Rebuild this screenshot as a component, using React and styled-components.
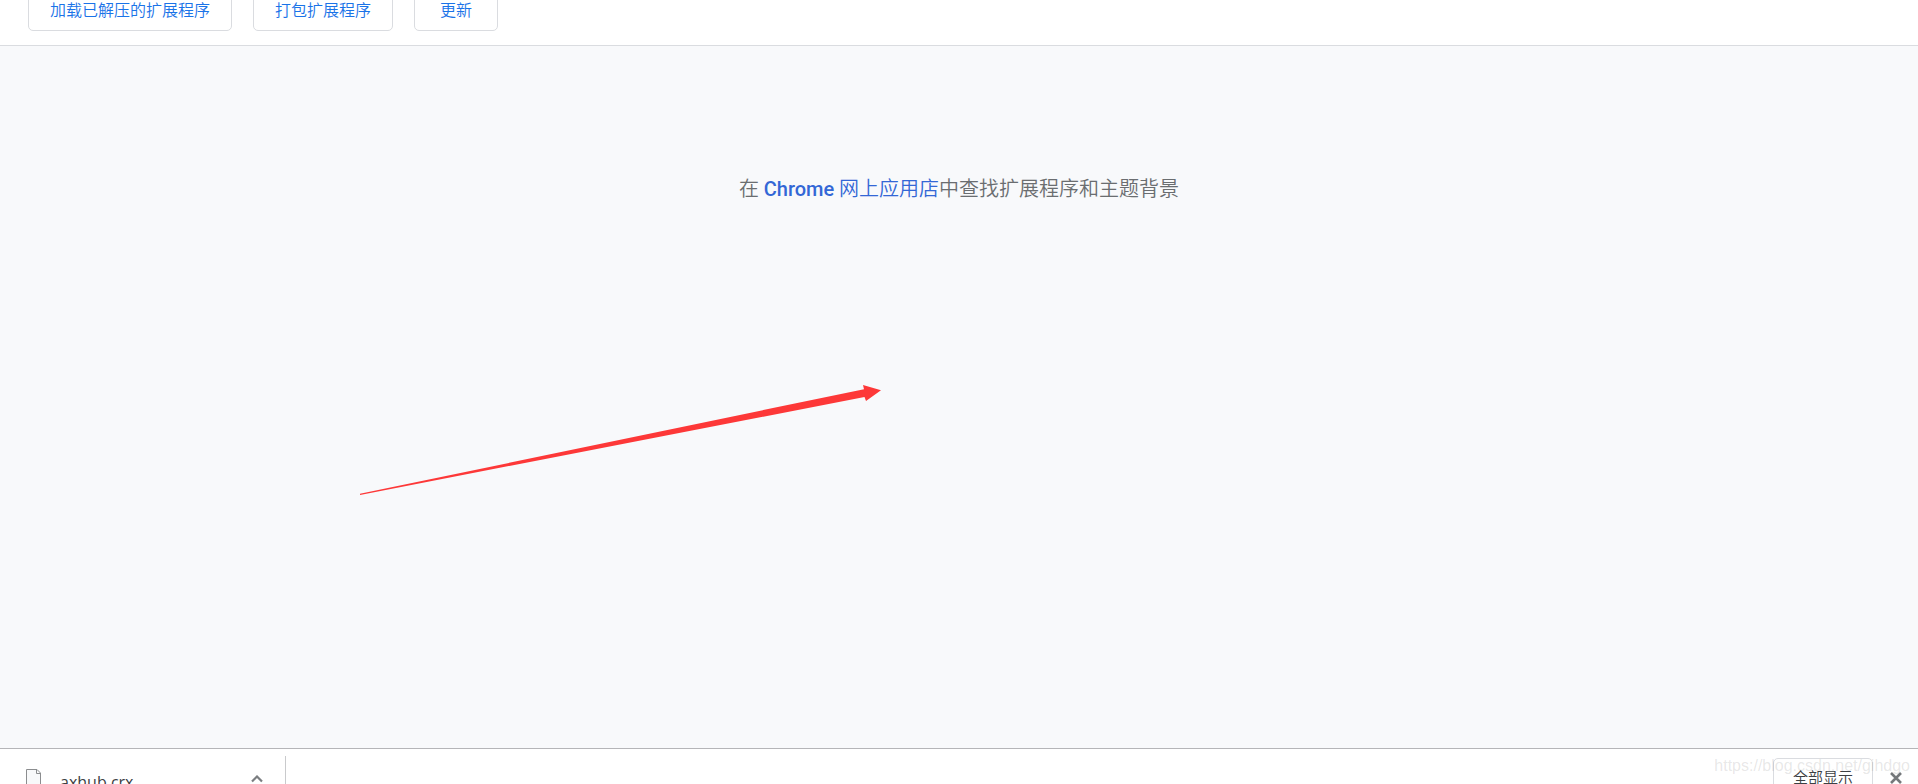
import React from "react"
import styled, { createGlobalStyle } from "styled-components"

const App = () => (
  <Page>
    <GlobalStyle />
    <Toolbar>
      <ToolbarButton type="button">加载已解压的扩展程序</ToolbarButton>
      <ToolbarButton type="button">打包扩展程序</ToolbarButton>
      <ToolbarButton type="button">更新</ToolbarButton>
    </Toolbar>
    <Main>
      <Message>
        在{" "}
        <StoreLink href="#store">
          <strong>Chrome</strong> 网上应用店
        </StoreLink>
        中查找扩展程序和主题背景
      </Message>
      <Arrow viewBox="0 0 523 118" aria-hidden="true">
        <path
          d="M1 115.8 L505 11.2 L504 7 L522 12.3 L507 23 L505.5 19 L1 117 Z"
          fill="#fd3838"
        />
      </Arrow>
    </Main>
    <Shelf>
      <Download>
        <FileIcon viewBox="0 0 16 20" aria-hidden="true">
          <path
            d="M.5 20V.5H11L14.5 4V20"
            fill="#f8f9fa"
            stroke="#8b8d8f"
          />
          <path d="M10.5 .5V4.5h4" fill="none" stroke="#8b8d8f" />
        </FileIcon>
        <FileName>axhub.crx</FileName>
        <IconButton type="button" aria-label="更多操作">
          <svg width="12" height="8" viewBox="0 0 12 8">
            <path
              d="M1 6.5l5-5 5 5"
              fill="none"
              stroke="#7b7e81"
              strokeWidth="2.2"
            />
          </svg>
        </IconButton>
      </Download>
      <ShelfActions>
        <ShowAll type="button">全部显示</ShowAll>
        <IconButton type="button" aria-label="关闭">
          <svg width="12" height="12" viewBox="0 0 12 12">
            <path d="M1 1l10 10M11 1L1 11" stroke="#75787b" strokeWidth="2.6" />
          </svg>
        </IconButton>
      </ShelfActions>
      <Watermark>https://blog.csdn.net/gihdgo</Watermark>
    </Shelf>
  </Page>
)

export default App

const GlobalStyle = createGlobalStyle`
  * {
    box-sizing: border-box;
  }

  body {
    margin: 0;
    font-family: Roboto, "Noto Sans CJK SC", sans-serif;
  }
`

const Page = styled.div`
  display: flex;
  flex-direction: column;
  height: 100vh;
  overflow: hidden;
  background: #f8f9fb;
`

const Toolbar = styled.header`
  display: flex;
  align-items: flex-end;
  flex-shrink: 0;
  gap: 21px;
  height: 46px;
  padding: 0 28px 14px;
  overflow: hidden;
  background: #fff;
  border-bottom: 1px solid #dadce0;
`

const ToolbarButton = styled.button`
  flex-shrink: 0;
  height: 40px;
  min-width: 84px;
  padding: 0 21px;
  background: #fff;
  border: 1px solid #dadce0;
  border-radius: 5px;
  color: #1a73e8;
  font-family: inherit;
  font-size: 16px;
  font-weight: 350;
  line-height: 20px;
  cursor: pointer;
`

const Main = styled.main`
  position: relative;
  flex: 1;
  padding-top: 129px;
`

const Message = styled.p`
  margin: 0;
  color: #6a6d70;
  font-size: 20px;
  font-weight: 350;
  line-height: 28px;
  text-align: center;
`

const StoreLink = styled.a`
  color: #3367d6;
  text-decoration: none;

  strong {
    font-weight: 500;
  }
`

const Arrow = styled.svg`
  position: absolute;
  top: 332px;
  left: 359px;
  width: 523px;
  height: 118px;
`

const Shelf = styled.footer`
  position: relative;
  display: flex;
  justify-content: space-between;
  flex-shrink: 0;
  height: 36px;
  overflow: hidden;
  background: #fff;
  border-top: 1px solid #b5b5b8;
`

const Download = styled.div`
  display: flex;
  align-items: center;
  width: 286px;
  height: 46px;
  margin-top: 7px;
  padding: 0 16px 0 26px;
  border-right: 1px solid #c9cacc;
`

const FileIcon = styled.svg`
  width: 16px;
  height: 20px;
`

const FileName = styled.span`
  flex: 1;
  padding: 6px 0 0 18px;
  color: #3c4043;
  font-family: "Open Sans", sans-serif;
  font-size: 16px;
  line-height: 24px;
`

const IconButton = styled.button`
  display: flex;
  align-items: center;
  justify-content: center;
  width: 24px;
  height: 24px;
  padding: 0;
  background: none;
  border: 0;
  cursor: pointer;
`

const ShelfActions = styled.div`
  display: flex;
  align-items: center;
  gap: 11px;
  height: 40px;
  margin-top: 9px;
  padding-right: 10px;
`

const ShowAll = styled.button`
  width: 100px;
  height: 40px;
  padding: 0;
  background: #fff;
  border: 1px solid #dadce0;
  border-radius: 5px;
  color: #3c4043;
  font-family: inherit;
  font-size: 15px;
  font-weight: 350;
  line-height: 20px;
  cursor: pointer;
`

const Watermark = styled.span`
  position: absolute;
  top: 7px;
  right: 8px;
  color: rgba(120, 120, 120, 0.18);
  font-family: "Liberation Sans", Arial, sans-serif;
  font-size: 16px;
  line-height: 20px;
  pointer-events: none;
`
